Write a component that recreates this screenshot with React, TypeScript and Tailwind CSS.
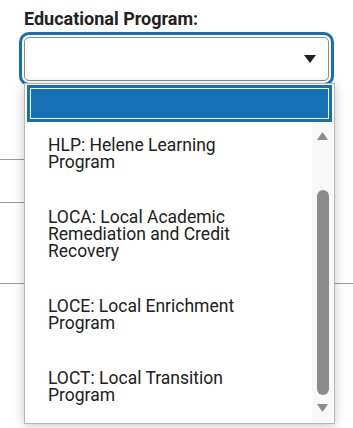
import React from "react";

const items = [
  "HLP: Helene Learning Program",
  "LOCA: Local Academic Remediation and Credit Recovery",
  "LOCE: Local Enrichment Program",
  "LOCT: Local Transition Program",
];

export default function App() {
  return (
    <div className="relative w-[353px] h-[428px] overflow-hidden bg-white font-['Roboto',sans-serif] text-[#222]">
      <div className="px-[24px] pt-[8px]">
        <div className="text-[18px] font-bold leading-[21px] text-[#222]">Educational Program:</div>
        <div className="mt-[8px] flex h-[44px] items-center justify-end rounded-[5px] border border-[#8c8c8c] bg-white pr-[12px] outline-[3px] outline-offset-[2px] outline-[#1570b8] outline-solid">
          <svg width="12" height="8" viewBox="0 0 12 8">
            <path d="M0 0H12L6 8Z" fill="#222" />
          </svg>
        </div>
      </div>
      <div className="mt-[78px] w-[100px] border-t border-[#9a9a9a]" />
      <div className="mt-[42px] w-[100px] border-t border-[#9a9a9a]" />
      <div className="mt-[80px] w-full border-t border-[#9a9a9a]" />

      <div className="absolute left-[24px] top-[83px] flex h-[341px] w-[311px] flex-col border border-[#b5b5b5] bg-white shadow-[0_2px_10px_rgba(0,0,0,0.22)]">
        <div className="mx-[2px] mt-[1px] h-[37px] bg-[#1570b8] p-[3px]">
          <div className="h-full border border-white bg-[#1570b8]" />
        </div>
        <div className="flex min-h-0 flex-1">
          <div className="flex flex-1 flex-col gap-[38px] pl-[23px] pt-[15px] text-[17.5px] font-normal leading-[17px] text-[#202020]">
            {items.map((t) => (
              <div key={t} className="w-[225px]">
                {t}
              </div>
            ))}
          </div>
          <div className="mr-[1px] flex w-[21px] flex-col items-center bg-[#f8f8f8]">
            <svg className="mt-[10px]" width="11" height="8" viewBox="0 0 11 8">
              <path d="M5.5 0L11 8H0Z" fill="#8c8c8c" />
            </svg>
            <div className="mt-[50px] h-[205px] w-[12px] rounded-full bg-[#8c8c8c]" />
            <svg className="mt-[9px]" width="11" height="8" viewBox="0 0 11 8">
              <path d="M0 0H11L5.5 8Z" fill="#8c8c8c" />
            </svg>
          </div>
        </div>
      </div>
    </div>
  );
}
